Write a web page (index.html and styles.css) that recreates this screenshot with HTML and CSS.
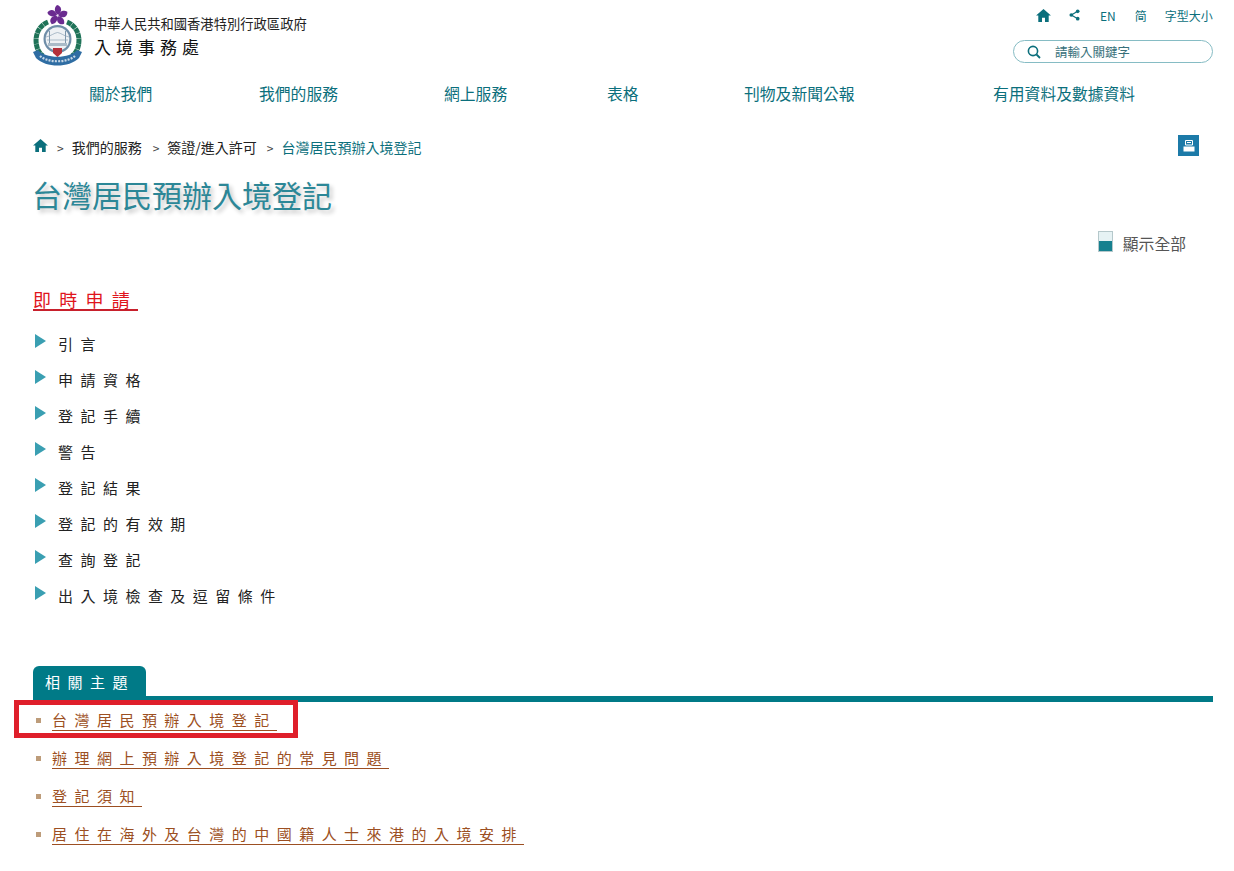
FILE: index.html
```html
<!DOCTYPE html>
<html lang="zh-Hant">
<head>
<meta charset="utf-8">
<title>台灣居民預辦入境登記</title>
<link rel="stylesheet" href="styles.css">
</head>
<body>
<header class="header">
  <div class="brand">
    <svg class="emblem" viewBox="0 0 50 62" width="50" height="62" aria-hidden="true">
      <g fill="none" stroke="#1f7358">
        <path d="M15 17C5 21 1 32 4 42C5 46 7 49 10 51" stroke-width="5" stroke-dasharray="5 .4"/>
        <path d="M34 17C44 21 48 32 45 42C44 46 42 49 39 51" stroke-width="5" stroke-dasharray="5 .4"/>
      </g>
      <circle cx="24.5" cy="34" r="14" fill="#6f8ea8"/>
      <circle cx="24.5" cy="34" r="11.8" fill="#eef1f4"/>
      <path d="M16.5 39V26M32.5 39V26" stroke="#7c95aa" stroke-width="1"/>
      <path d="M13 32C18 31 21 28 24.5 27.5C28 28 31 31 36 32M14 35H35" fill="none" stroke="#8ea4b6" stroke-width=".7"/>
      <rect x="15" y="38" width="19" height="3" fill="#aabbc8"/>
      <g fill="#6a2b90">
        <path d="M24 0C28.5 1 30 6 25 10C21.5 8 20.5 3 24 0Z"/>
        <path d="M24 0C28.5 1 30 6 25 10C21.5 8 20.5 3 24 0Z" transform="rotate(72 24.5 10.5)"/>
        <path d="M24 0C28.5 1 30 6 25 10C21.5 8 20.5 3 24 0Z" transform="rotate(144 24.5 10.5)"/>
        <path d="M24 0C28.5 1 30 6 25 10C21.5 8 20.5 3 24 0Z" transform="rotate(216 24.5 10.5)"/>
        <path d="M24 0C28.5 1 30 6 25 10C21.5 8 20.5 3 24 0Z" transform="rotate(288 24.5 10.5)"/>
      </g>
      <circle cx="24.5" cy="10.5" r="1" fill="#efe6f4"/>
      <path d="M0 47L5 45C12 54 37 54 44 45L49 47L46 53C36 63 13 63 3 53Z" fill="#2f6da3"/>
      <path d="M7 51C15 58 34 58 42 51" fill="none" stroke="#c7d7e6" stroke-width="2.2" stroke-dasharray="2 1.2"/>
      <path d="M20 43H29V48L24.5 52L20 48Z" fill="#b3303a"/>
    </svg>
    <div class="brand-text">
      <div class="gov">中華人民共和國香港特別行政區政府</div>
      <div class="dept">入境事務處</div>
    </div>
  </div>
  <div class="tools">
    <div class="toolbar">
      <svg class="tool-home" viewBox="0 0 16 14" width="15" height="13" aria-hidden="true"><path d="M8 0L16 7H13.6V14H9.6V9.5H6.4V14H2.4V7H0Z" fill="#0b6f7c"/></svg>
      <svg class="tool-share" viewBox="0 0 12 12" width="11" height="12" aria-hidden="true"><path d="M9.5 2L2.5 6L9.5 10" fill="none" stroke="#0b6f7c" stroke-width="1.3"/><circle cx="9.5" cy="2" r="2" fill="#0b6f7c"/><circle cx="2.5" cy="6" r="2" fill="#0b6f7c"/><circle cx="9.5" cy="10" r="2" fill="#0b6f7c"/></svg>
      <span class="tool-link tool-en">EN</span>
      <span class="tool-link tool-sc">简</span>
      <span class="tool-link tool-size">字型大小</span>
    </div>
    <div class="search">
      <svg viewBox="0 0 14 14" width="14" height="14" aria-hidden="true"><circle cx="6" cy="6" r="4.6" fill="none" stroke="#0b6f7c" stroke-width="1.6"/><path d="M9.5 9.5L13 13" stroke="#0b6f7c" stroke-width="1.8"/></svg>
      <span>請輸入關鍵字</span>
    </div>
  </div>
</header>

<nav class="nav">
  <a class="nav-about">關於我們</a>
  <a class="nav-services">我們的服務</a>
  <a class="nav-online">網上服務</a>
  <a class="nav-forms">表格</a>
  <a class="nav-pubs">刊物及新聞公報</a>
  <a class="nav-data">有用資料及數據資料</a>
</nav>

<main class="main">
  <div class="crumb-row">
    <div class="crumbs">
      <svg viewBox="0 0 16 14" width="15" height="13" aria-hidden="true"><path d="M8 0L16 7H13.6V14H9.6V9.5H6.4V14H2.4V7H0Z" fill="#0b6f7c"/></svg>
      <span class="sep">&gt;</span><span>我們的服務</span>
      <span class="sep sep-second">&gt;</span><span>簽證/進入許可</span>
      <span class="sep sep-third">&gt;</span><span class="current">台灣居民預辦入境登記</span>
    </div>
    <div class="print">
      <svg viewBox="0 0 12 12" width="12" height="12" aria-hidden="true"><path d="M2.5 0.5H9.5V5H2.5Z" fill="none" stroke="#fff"/><path d="M4 2.5H8" stroke="#fff"/><rect x="0.5" y="6.5" width="11" height="5" fill="#fff"/></svg>
    </div>
  </div>

  <h1 class="title">台灣居民預辦入境登記</h1>

  <div class="show-all">
    <span class="toggle"></span>
    <span>顯示全部</span>
  </div>

  <a class="apply">即時申請</a>

  <ul class="sections">
    <li>引言</li>
    <li>申請資格</li>
    <li>登記手續</li>
    <li>警告</li>
    <li>登記結果</li>
    <li>登記的有效期</li>
    <li>查詢登記</li>
    <li>出入境檢查及逗留條件</li>
  </ul>

  <section class="related">
    <div class="related-tab">相關主題</div>
    <ul class="related-list">
      <li class="highlighted"><a>台灣居民預辦入境登記</a></li>
      <li><a>辦理網上預辦入境登記的常見問題</a></li>
      <li><a>登記須知</a></li>
      <li><a>居住在海外及台灣的中國籍人士來港的入境安排</a></li>
    </ul>
  </section>
</main>
</body>
</html>
```

FILE: styles.css
```css
* { box-sizing: border-box; }
html, body { margin: 0; padding: 0; }
body {
  width: 1234px;
  height: 871px;
  overflow: hidden;
  background: #fff;
  color: #222;
  font-family: "Noto Sans CJK TC", "Noto Sans", sans-serif;
}
ul { list-style: none; margin: 0; padding: 0; }

.header {
  display: flex;
  justify-content: space-between;
  padding: 5px 21px 0 33px;
  height: 76px;
}
.brand { display: flex; align-items: flex-start; }
.emblem { display: block; }
.brand-text { margin: 10px 0 0 11px; }
.gov { font-size: 13.3px; line-height: 18px; color: #222; }
.dept { font-size: 17px; line-height: 22px; margin-top: 3px; letter-spacing: 5px; color: #111; }

.tools { width: 200px; }
.toolbar {
  display: flex;
  align-items: center;
  height: 20px;
  font-size: 12px;
  color: #0b6f7c;
  white-space: nowrap;
}
.tool-home { margin-left: 23px; }
.tool-share { margin-left: 18px; }
.tool-en { margin-left: 20px; }
.tool-sc { margin-left: 19px; }
.tool-size { margin-left: 18px; }
.search {
  display: flex;
  align-items: center;
  height: 23px;
  margin-top: 15px;
  padding-left: 13px;
  border: 1px solid #86bcc4;
  border-radius: 12px;
  font-size: 12.5px;
  color: #37707a;
}
.search span { margin-left: 14px; }

.nav {
  display: flex;
  padding-left: 89px;
  height: 37px;
  font-size: 15.8px;
  line-height: 36px;
  color: #0b6f7c;
}
.nav-services { margin-left: 106.8px; }
.nav-online { margin-left: 106px; }
.nav-forms { margin-left: 99.8px; }
.nav-pubs { margin-left: 105.4px; }
.nav-data { margin-left: 138.4px; }

.main { padding: 0 21px 0 33px; }
.crumb-row {
  display: flex;
  justify-content: space-between;
  padding: 22px 14px 0 0;
  height: 48px;
}
.crumbs {
  display: flex;
  align-items: center;
  height: 24px;
  font-size: 14px;
  color: #222;
}
.crumbs svg { margin: -3px 0 0 0; }
.sep { margin: 0 8px 0 9px; color: #444; font-size: 12px; }
.sep-second { margin-left: 11px; }
.sep-third { margin-left: 10px; }
.current { color: #0b6f7c; }
.print {
  display: flex;
  align-items: center;
  justify-content: center;
  width: 21px;
  height: 21px;
  background: #1c7aa8;
}

.title {
  margin: 12px 0 0 -1px;
  font-size: 30px;
  line-height: 42px;
  font-weight: 400;
  color: #2c8797;
  text-shadow: 3px 3px 4px #c4c4c4;
}

.show-all {
  display: flex;
  justify-content: flex-end;
  align-items: center;
  height: 24px;
  margin-top: 16px;
  padding-right: 27px;
  font-size: 15.8px;
  color: #555;
}
.toggle {
  width: 15px;
  height: 21px;
  margin: -4px 10px 0 0;
  border: 1px solid #b5c8cb;
  background: linear-gradient(#e6f2f4 45%, #16808f 45%);
}

.apply {
  display: inline-block;
  margin-top: 34px;
  font-size: 18px;
  line-height: 20px;
  letter-spacing: 8.25px;
  color: #e0141c;
  border-bottom: 2px solid #c8202c;
}

.sections { margin-top: 13px; }
.sections li {
  display: flex;
  align-items: center;
  height: 36px;
  font-size: 15px;
  letter-spacing: 7.47px;
  color: #222;
}
.sections li::before {
  content: "";
  width: 0;
  height: 0;
  margin: -4px 12px 0 2px;
  border-style: solid;
  border-width: 7px 0 7px 11px;
  border-color: transparent transparent transparent #3a9fb2;
}

.related { margin-top: 53px; }
.related-tab {
  width: 113px;
  height: 30px;
  padding-left: 12px;
  border-radius: 6px 6px 0 0;
  background: #007a87;
  color: #fff;
  font-size: 15px;
  line-height: 32px;
  letter-spacing: 7.47px;
}
.related-list { border-top: 6px solid #007a87; }
.related-list li {
  display: flex;
  align-items: flex-start;
  height: 38px;
  padding-top: 8px;
  font-size: 15px;
  letter-spacing: 7.47px;
}
.related-list li::before {
  content: "";
  width: 5px;
  height: 5px;
  margin: 8px 11px 0 3px;
  background: #bd9c7a;
}
.related-list a {
  color: #9c4f22;
  line-height: 20px;
  border-bottom: 1px solid #9c4f22;
}
.highlighted { position: relative; }
.highlighted::after {
  content: "";
  box-sizing: border-box;
  position: absolute;
  left: -19px;
  top: -2px;
  width: 284px;
  height: 38px;
  border: 5px solid #df1f2b;
}
```
